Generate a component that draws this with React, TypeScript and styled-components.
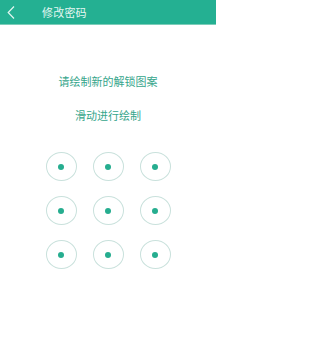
import React from 'react'
import styled, { createGlobalStyle } from 'styled-components'

const GlobalStyle = createGlobalStyle`
  html, body {
    margin: 0;
    padding: 0;
    background: #ffffff;
    font-family: "Noto Sans CJK SC", "Noto Sans", sans-serif;
  }
`

const Page = styled.div`
  width: 216px;
  height: 360px;
  background: #ffffff;
  display: flex;
  flex-direction: column;
`

const Header = styled.header`
  height: 24px;
  background: #24b092;
  border-bottom: 1px solid #7ccdb9;
  display: flex;
  align-items: center;
`

const BackButton = styled.span`
  width: 42px;
  height: 24px;
  display: flex;
  align-items: center;
  padding-left: 7px;
  box-sizing: border-box;
`

const Title = styled.h1`
  margin: 0;
  font-size: 11px;
  font-weight: 400;
  color: #e3f6f1;
  letter-spacing: 0.2px;
`

const Prompt = styled.p<{ $top: number }>`
  margin: ${(p) => p.$top}px 0 0;
  font-size: 11px;
  line-height: 16px;
  text-align: center;
  color: #35a58b;
`

const Grid = styled.div`
  margin-top: 29px;
  display: grid;
  grid-template-columns: repeat(3, 31px);
  grid-auto-rows: 29px;
  column-gap: 16px;
  row-gap: 15px;
  justify-content: center;
`

const Node = styled.div`
  border: 1px solid #c9e1dc;
  border-radius: 50%;
  display: flex;
  align-items: center;
  justify-content: center;
`

const Dot = styled.span`
  width: 6px;
  height: 6px;
  border-radius: 50%;
  background: #26ad8f;
`

const BackIcon = () => (
  <svg width="8" height="13" viewBox="0 0 8 13">
    <path d="M7 0.5 L1.2 6.5 L7 12.5" fill="none" stroke="#e3f6f1" strokeWidth="1.2" />
  </svg>
)

const App: React.FC = () => (
  <>
    <GlobalStyle />
    <Page>
      <Header>
        <BackButton>
          <BackIcon />
        </BackButton>
        <Title>修改密码</Title>
      </Header>
      <Prompt $top={48}>请绘制新的解锁图案</Prompt>
      <Prompt $top={18}>滑动进行绘制</Prompt>
      <Grid>
        {Array.from({ length: 9 }).map((_, i) => (
          <Node key={i}>
            <Dot />
          </Node>
        ))}
      </Grid>
    </Page>
  </>
)

export default App
